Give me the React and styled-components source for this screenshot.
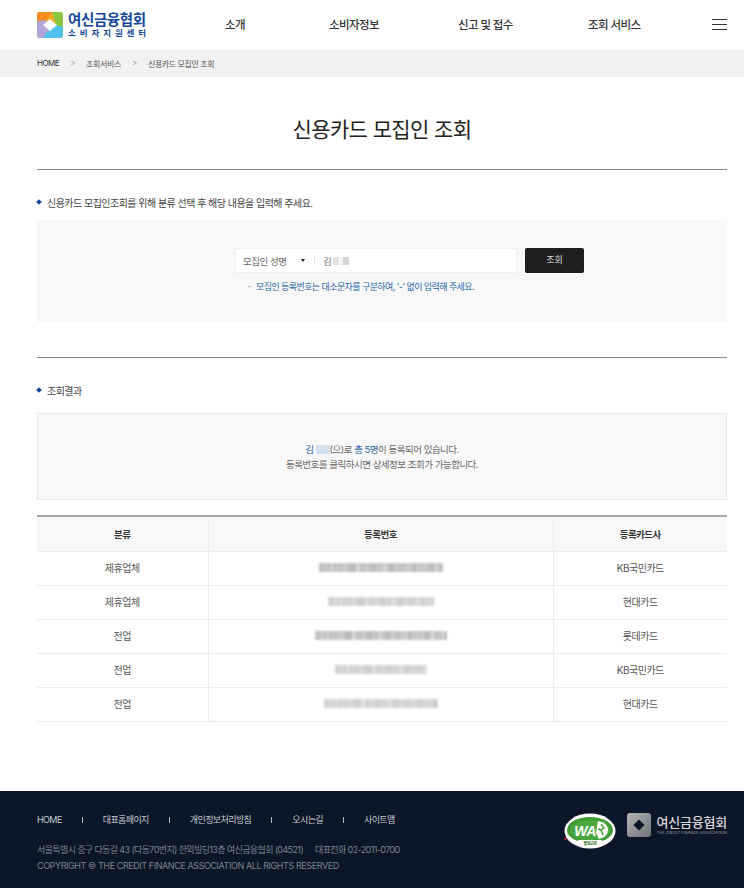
import React from "react";
import styled, { createGlobalStyle } from "styled-components";

const KR = `Inter, "Noto Sans CJK KR", sans-serif`;

const Global = createGlobalStyle`
  html, body { margin: 0; padding: 0; background: #fff; }
  body { font-family: ${KR}; color: #333; letter-spacing: -0.5px; }
  * { box-sizing: border-box; }
`;

const rows = [
  { type: "제휴업체", w: 124, card: "KB국민카드" },
  { type: "제휴업체", w: 106, card: "현대카드", light: true },
  { type: "전업", w: 132, card: "롯데카드" },
  { type: "전업", w: 92, card: "KB국민카드", light: true },
  { type: "전업", w: 114, card: "현대카드", light: true },
];

const LogoMark = () => (
  <svg width="26" height="26" viewBox="0 0 26 26">
    <defs>
      <clipPath id="logoClip"><rect width="26" height="26" rx="3" /></clipPath>
    </defs>
    <g clipPath="url(#logoClip)">
      <rect width="26" height="26" fill="#f5a623" />
      <polygon points="0,0 15,0 9,8 0,14" fill="#f28c1e" />
      <polygon points="15,0 26,0 26,17 19,13" fill="#8cc63f" />
      <polygon points="0,9 9,8 13,20 10,26 0,26" fill="#b3a5d8" />
      <polygon points="10,20 19,13 26,15 26,26 6,26" fill="#4fc3ee" />
      <polygon points="13,7 20,13 13,19 6,13" fill="#fff" />
    </g>
  </svg>
);

const Hamburger = () => (
  <svg width="15" height="12" viewBox="0 0 15 12">
    <path d="M0 .5h15M0 5.5h15M0 10.5h15" stroke="#333" strokeWidth="1" />
  </svg>
);

const WaMark = () => (
  <svg width="52" height="36" viewBox="0 0 52 36">
    <ellipse cx="26" cy="18" rx="25.5" ry="17.5" fill="#fff" />
    <ellipse cx="26" cy="17" rx="23" ry="13" fill="#3f9a35" />
    <ellipse cx="26" cy="17" rx="20" ry="10" fill="#4aa83e" />
    <rect x="14" y="27" width="24" height="6" rx="1" fill="#fff" />
    <path d="M34 8 q10 2 10 9 t-9 9 l-3 -6 z" fill="#fff" />
    <path d="M37 11 l3 4 -3 2 2 5 M34 16 l3 1" stroke="#3f9a35" strokeWidth="1.4" fill="none" />
    <text x="21" y="23" fontSize="14" fontWeight="700" fontStyle="italic" fill="#fff" fontFamily="Liberation Sans, sans-serif" textAnchor="middle">WA</text>
    <text x="26" y="32" fontSize="4" fontWeight="700" fill="#2f7a28" fontFamily="Noto Sans CJK KR, sans-serif" textAnchor="middle">웹 접근성</text>
    <circle cx="1.5" cy="26" r="1.2" fill="#e0202a" />
  </svg>
);

const CreditMark = () => (
  <svg width="24" height="24" viewBox="0 0 24 24">
    <defs>
      <linearGradient id="creditGrad" x1="0" y1="0" x2="1" y2="1">
        <stop offset="0" stopColor="#b5b5b5" />
        <stop offset="1" stopColor="#6f7276" />
      </linearGradient>
    </defs>
    <rect width="24" height="24" rx="3" fill="url(#creditGrad)" />
    <polygon points="12,6.5 17.5,12 12,17.5 6.5,12" fill="#0b1628" />
  </svg>
);

export default function App() {
  return (
    <>
      <Global />
      <Header>
        <Brand>
          <LogoMark />
          <BrandText>
            <BrandName>여신금융협회</BrandName>
            <BrandSub>소비자지원센터</BrandSub>
          </BrandText>
        </Brand>
        <Nav>
          <NavItem $w={21}>소개</NavItem>
          <NavItem $w={50}>소비자정보</NavItem>
          <NavItem $w={55}>신고 및 접수</NavItem>
          <NavItem $w={53}>조회 서비스</NavItem>
        </Nav>
        <Hamburger />
      </Header>
      <Crumbs>
        <CrumbHome>HOME</CrumbHome>
        <CrumbArrow>&gt;</CrumbArrow>
        <Crumb>조회서비스</Crumb>
        <CrumbArrow>&gt;</CrumbArrow>
        <Crumb>신용카드 모집인 조회</Crumb>
      </Crumbs>
      <Main>
        <Title>신용카드 모집인 조회</Title>
        <Bullet>신용카드 모집인조회를 위해 분류 선택 후 해당 내용을 입력해 주세요.</Bullet>
        <SearchBox>
          <SearchRow>
            <SearchField>
              <SelectLabel>모집인 성명</SelectLabel>
              <Caret />
              <FieldDivider />
              <FieldValue>김</FieldValue>
              <NameBlur />
            </SearchField>
            <SearchButton>조회</SearchButton>
          </SearchRow>
          <SearchHint>모집인 등록번호는 대소문자를 구분하여, '-' 없이 입력해 주세요.</SearchHint>
        </SearchBox>
        <Divider />
        <Bullet>조회결과</Bullet>
        <ResultBox>
          <p>
            <Blue>김</Blue> <ResultBlur />(으)로 <Blue>총 5명</Blue>이 등록되어 있습니다.
          </p>
          <p>등록번호를 클릭하시면 상세정보 조회가 가능합니다.</p>
        </ResultBox>
        <Table>
          <thead>
            <tr>
              <Th $w={171}>분류</Th>
              <Th $w={345}>등록번호</Th>
              <Th $w={174}>등록카드사</Th>
            </tr>
          </thead>
          <tbody>
            {rows.map((r, i) => (
              <tr key={i}>
                <Td>{r.type}</Td>
                <Td><Redacted $light={r.light} style={{ width: r.w }} /></Td>
                <Td>{r.card}</Td>
              </tr>
            ))}
          </tbody>
        </Table>
      </Main>
      <Footer>
        <FooterLeft>
          <FooterLinks>
            <FooterLink>HOME</FooterLink>
            <FooterSep />
            <FooterLink>대표홈페이지</FooterLink>
            <FooterSep />
            <FooterLink>개인정보처리방침</FooterLink>
            <FooterSep />
            <FooterLink>오시는길</FooterLink>
            <FooterSep />
            <FooterLink>사이트맵</FooterLink>
          </FooterLinks>
          <FooterAddress>
            <span>서울특별시 중구 다동길 43 (다동70번지) 한외빌딩13층 여신금융협회 (04521)</span>
            <span>대표전화 02-2011-0700</span>
          </FooterAddress>
          <FooterCopy>COPYRIGHT © THE CREDIT FINANCE ASSOCIATION ALL RIGHTS RESERVED</FooterCopy>
        </FooterLeft>
        <FooterMarks>
          <WaMark />
          <CreditBrand>
            <CreditMark />
            <CreditText>
              <CreditName>여신금융협회</CreditName>
              <CreditSub>THE CREDIT FINANCE ASSOCIATION</CreditSub>
            </CreditText>
          </CreditBrand>
        </FooterMarks>
      </Footer>
    </>
  );
}

const Header = styled.header`
  height: 50px;
  padding: 0 17px 0 37px;
  display: flex;
  align-items: center;
  background: #fff;
`;

const Brand = styled.div`
  width: 188px;
  flex: none;
  display: flex;
  align-items: center;
  gap: 5px;
`;

const BrandText = styled.div`
  display: flex;
  flex-direction: column;
`;

const BrandName = styled.div`
  font-size: 14.5px;
  line-height: 17px;
  font-weight: 700;
  color: #14479a;
  letter-spacing: -0.4px;
`;

const BrandSub = styled.div`
  font-size: 8.5px;
  line-height: 11px;
  font-weight: 700;
  color: #14479a;
  letter-spacing: 3.9px;
  white-space: nowrap;
`;

const Nav = styled.nav`
  flex: 1;
  padding-bottom: 3px;
  display: flex;
  align-items: center;
`;

const NavItem = styled.a`
  width: ${(p) => p.$w}px;
  white-space: nowrap;
  font-size: 11.5px;
  font-weight: 500;
  color: #333;
  letter-spacing: -0.6px;
  &:nth-child(1) { margin-right: 83px; }
  &:nth-child(2) { margin-right: 79px; }
  &:nth-child(3) { margin-right: 75px; }
`;

const Crumbs = styled.div`
  height: 27px;
  padding: 0 0 1px 37px;
  display: flex;
  align-items: center;
  background: #f1f1f1;
  font-size: 8px;
  color: #555;
`;

const CrumbHome = styled.span`
  color: #333;
`;

const Crumb = styled.span`
  letter-spacing: -0.4px;
`;

const CrumbArrow = styled.span`
  width: 27px;
  text-align: center;
  color: #999;
`;

const Main = styled.main`
  padding: 0 17px 69px 37px;
`;

const Title = styled.h1`
  margin: 0 0 20px;
  height: 93px;
  padding-top: 38px;
  line-height: 30px;
  border-bottom: 1px solid #8a8a8a;
  text-align: center;
  font-size: 21px;
  font-weight: 400;
  color: #222;
  letter-spacing: -0.6px;
`;

const Bullet = styled.div`
  height: 24px;
  margin-bottom: 6px;
  display: flex;
  align-items: center;
  gap: 6px;
  font-size: 10px;
  letter-spacing: -0.53px;
  color: #444;
  &::before {
    content: "";
    width: 4px;
    height: 4px;
    background: #14479a;
    transform: rotate(45deg);
  }
`;

const SearchBox = styled.section`
  height: 102px;
  padding: 28px 0 0 198px;
  background: #f8f8f8;
`;

const SearchRow = styled.div`
  display: flex;
  align-items: flex-start;
  gap: 8px;
`;

const SearchField = styled.div`
  width: 282px;
  height: 25px;
  padding-left: 7px;
  display: flex;
  align-items: center;
  background: #fff;
  border: 1px solid #efefef;
  font-size: 9.5px;
  color: #666;
`;

const SelectLabel = styled.span`
  width: 58px;
  white-space: nowrap;
`;

const Caret = styled.span`
  width: 0;
  height: 0;
  border-left: 2.5px solid transparent;
  border-right: 2.5px solid transparent;
  border-top: 3px solid #222;
`;

const FieldDivider = styled.span`
  width: 1px;
  height: 8px;
  margin: 0 8px 0 9px;
  background: #ddd;
`;

const FieldValue = styled.span`
  color: #777;
`;

const NameBlur = styled.span`
  width: 16px;
  height: 8px;
  margin-left: 2px;
  background: linear-gradient(90deg, #e4e4e4 0 35%, #f4f4f4 35% 60%, #d4d4d4 60%);
`;

const SearchButton = styled.button`
  width: 59px;
  height: 25px;
  padding: 0 0 2px;
  border: 0;
  border-radius: 2px;
  background: #1e1e1e;
  color: #ddd;
  font-family: inherit;
  font-size: 9px;
`;

const SearchHint = styled.div`
  margin: 6px 0 0 13px;
  display: flex;
  align-items: center;
  gap: 5px;
  height: 14px;
  font-size: 9px;
  color: #2a66ab;
  white-space: nowrap;
  letter-spacing: -0.58px;
  &::before {
    content: "·";
    color: #555;
    margin-right: 1px;
  }
`;

const Divider = styled.hr`
  height: 1px;
  margin: 35px 0 20px;
  border: 0;
  background: #8a8a8a;
`;

const ResultBox = styled.section`
  height: 87px;
  margin-top: 11px;
  margin-bottom: 15px;
  padding-top: 28px;
  background: #f8f8f8;
  border: 1px solid #e6e6e6;
  text-align: center;
  font-size: 9.5px;
  line-height: 15px;
  color: #666;
  p {
    margin: 0;
  }
`;

const Blue = styled.span`
  color: #2a66ab;
`;

const ResultBlur = styled.span`
  display: inline-block;
  width: 14px;
  height: 9px;
  vertical-align: -1px;
  background: #d3e0ee;
`;

const Table = styled.table`
  width: 100%;
  table-layout: fixed;
  border-collapse: collapse;
  border-top: 2px solid #a8a8a8;
`;

const Th = styled.th`
  width: ${(p) => p.$w}px;
  height: 35px;
  padding: 0;
  background: #f8f8f8;
  border-bottom: 1px solid #ececec;
  border-left: 1px solid #ececec;
  font-size: 9.5px;
  font-weight: 700;
  color: #333;
  &:first-child { border-left: 0; }
`;

const Td = styled.td`
  height: 34px;
  padding: 0 0 1px;
  text-align: center;
  border-bottom: 1px solid #ececec;
  border-left: 1px solid #ececec;
  font-size: 10px;
  color: #555;
  &:first-child { border-left: 0; }
`;

const Redacted = styled.div`
  height: 9px;
  margin: 0 auto;
  opacity: ${(p) => (p.$light ? 0.72 : 1)};
  background:
    repeating-linear-gradient(90deg, rgba(255,255,255,0) 0 11px, rgba(255,255,255,.25) 11px 15px, rgba(255,255,255,0) 15px 23px, rgba(255,255,255,.15) 23px 26px),
    repeating-linear-gradient(90deg, #c2c2c2 0 6px, #cccccc 6px 9px, #bdbdbd 9px 17px, #c9c9c9 17px 20px);
  filter: blur(1.2px);
`;

const Footer = styled.footer`
  height: 97px;
  padding: 0 17px 0 37px;
  display: flex;
  justify-content: space-between;
  background: #0b1628;
`;

const FooterLeft = styled.div`
  padding-top: 22px;
  font-size: 9px;
`;

const FooterLinks = styled.div`
  height: 14px;
  margin-bottom: 15px;
  display: flex;
  align-items: center;
`;

const FooterLink = styled.a`
  color: #c8ccd2;
  font-size: 9px;
  letter-spacing: -0.6px;
`;

const FooterSep = styled.span`
  width: 1px;
  height: 6px;
  margin: 0 20px;
  background: #b5b9c0;
`;

const FooterAddress = styled.div`
  height: 16px;
  display: flex;
  gap: 12px;
  align-items: center;
  color: #7d838c;
  white-space: nowrap;
  letter-spacing: -0.62px;
`;

const FooterCopy = styled.div`
  height: 16px;
  display: flex;
  align-items: center;
  color: #7d838c;
  white-space: nowrap;
  letter-spacing: -0.42px;
`;

const FooterMarks = styled.div`
  padding-top: 22px;
  display: flex;
  align-items: flex-start;
  gap: 11px;
`;

const CreditBrand = styled.div`
  display: flex;
  align-items: center;
  gap: 5px;
`;

const CreditText = styled.div`
  display: flex;
  flex-direction: column;
`;

const CreditName = styled.div`
  font-size: 13px;
  line-height: 16px;
  font-weight: 500;
  color: #d8d8d8;
  letter-spacing: -0.2px;
`;

const CreditSub = styled.div`
  font-size: 4px;
  line-height: 6px;
  color: #9a9a9a;
  letter-spacing: 0;
  white-space: nowrap;
`;
